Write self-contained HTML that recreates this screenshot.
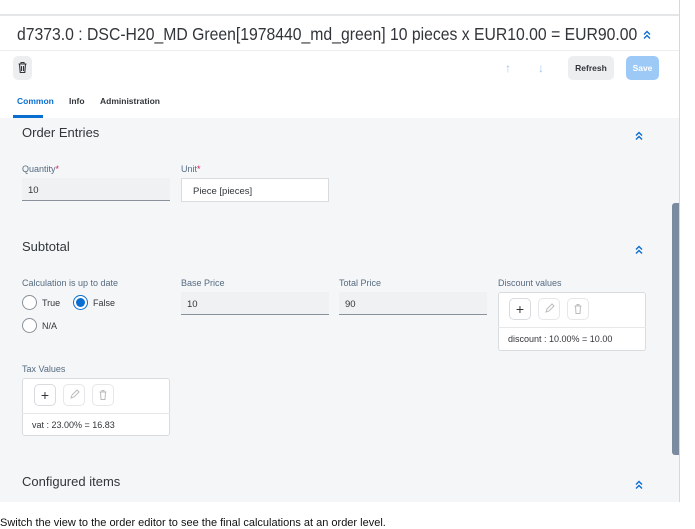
<!DOCTYPE html>
<html><head><style>
*{box-sizing:border-box;margin:0;padding:0}
body{width:695px;height:522px;overflow:hidden;background:#fff;font-family:"Liberation Sans",sans-serif;position:relative;color:#32363a}
.a{position:absolute}
.lbl{font-size:9px;color:#556b82}
.inp{position:absolute;height:23px;background:#eff1f2;border-bottom:1px solid #89919a;font-size:9.5px;padding:7px 6px;color:#32363a}
.chev{position:absolute}
.radio{position:absolute;width:15px;height:15px;border-radius:50%;border:1px solid #89919a;background:#fff}
.box{position:absolute;background:#fff;border:1px solid #d9dcdf;border-radius:3px}
.btn{position:absolute;width:22px;height:22px;border:1px solid #e5e7e9;border-radius:5px;background:#fff;text-align:center;font-size:14px;line-height:20px}
</style></head><body>
<div class="a" style="left:0;top:14px;width:679px;height:2px;background:#e4e6e8"></div>
<div class="a" style="left:679px;top:0;width:1px;height:502px;background:#d6d9dc"></div>
<div class="a" style="left:17px;top:24px;font-size:17.5px;color:#32363a;white-space:nowrap;transform:scaleX(0.9);transform-origin:0 0">d7373.0 : DSC-H20_MD Green[1978440_md_green] 10 pieces x EUR10.00 = EUR90.00</div>
<svg class="chev" style="left:643px;top:30px" width="8" height="10" viewBox="0 0 8 10"><path d="M1 4.5L4 1.5 7 4.5M1 8.5L4 5.5 7 8.5" fill="none" stroke="#0a6ed1" stroke-width="1.4"/></svg>
<div class="a" style="left:0;top:50px;width:679px;height:1px;background:#eceef0"></div>
<div class="a" style="left:13px;top:56px;width:19px;height:24px;background:#eceef0;border-radius:5px"></div>
<svg class="a" style="left:17px;top:61px" width="11" height="13" viewBox="0 0 11 13"><path d="M1.5 3h8M4 3V1.5h3V3M2.5 3l.7 8.5h4.6L8.5 3M4.5 5v5M6.5 5v5" fill="none" stroke="#32363a" stroke-width="1.1"/></svg>
<div class="a" style="left:505px;top:61px;color:#9cc6ef;font-size:12px">↑</div>
<div class="a" style="left:538px;top:61px;color:#9cc6ef;font-size:12px">↓</div>
<div class="a" style="left:568px;top:56px;width:46px;height:24px;background:#eceef0;border-radius:5px;font-size:8.5px;font-weight:bold;text-align:center;line-height:24px;color:#32363a">Refresh</div>
<div class="a" style="left:626px;top:56px;width:33px;height:24px;background:#9cc9f6;border-radius:5px;font-size:8.5px;font-weight:bold;text-align:center;line-height:24px;color:#fff">Save</div>
<div class="a" style="left:17px;top:96px;font-size:8.5px;font-weight:bold;color:#0a6ed1">Common</div>
<div class="a" style="left:69px;top:96px;font-size:8.5px;font-weight:bold">Info</div>
<div class="a" style="left:100px;top:96px;font-size:8.5px;font-weight:bold">Administration</div>
<div class="a" style="left:13px;top:115px;width:30px;height:3px;background:#0a6ed1"></div>
<div class="a" style="left:0;top:118px;width:679px;height:384px;background:#f5f6f7"></div>
<div class="a" style="left:672px;top:203px;width:7px;height:252px;background:#7a8ba0;border-radius:3px 0 0 3px"></div>
<div class="a" style="left:22px;top:125px;font-size:13px">Order Entries</div>
<svg class="chev" style="left:635px;top:131px" width="8" height="10" viewBox="0 0 8 10"><path d="M1 4.5L4 1.5 7 4.5M1 8.5L4 5.5 7 8.5" fill="none" stroke="#0a6ed1" stroke-width="1.4"/></svg>
<div class="a lbl" style="left:22px;top:164px">Quantity<span style="color:#d81b60">*</span></div>
<div class="inp" style="left:22px;top:178px;width:148px">10</div>
<div class="a lbl" style="left:181px;top:164px">Unit<span style="color:#d81b60">*</span></div>
<div class="a" style="left:181px;top:178px;width:148px;height:24px;background:#fff;border:1px solid #d9dcdf;font-size:9.5px;padding:7px 11px">Piece [pieces]</div>
<div class="a" style="left:22px;top:239px;font-size:13px">Subtotal</div>
<svg class="chev" style="left:635px;top:245px" width="8" height="10" viewBox="0 0 8 10"><path d="M1 4.5L4 1.5 7 4.5M1 8.5L4 5.5 7 8.5" fill="none" stroke="#0a6ed1" stroke-width="1.4"/></svg>
<div class="a lbl" style="left:22px;top:278px">Calculation is up to date</div>
<div class="radio" style="left:22px;top:295px"></div><div class="a" style="left:42px;top:298px;font-size:9px">True</div>
<div class="radio" style="left:73px;top:295px;border-color:#0a6ed1"><div style="width:9px;height:9px;border-radius:50%;background:#0a6ed1;margin:2px"></div></div><div class="a" style="left:93px;top:298px;font-size:9px">False</div>
<div class="radio" style="left:22px;top:318px"></div><div class="a" style="left:42px;top:321px;font-size:9px">N/A</div>
<div class="a lbl" style="left:181px;top:278px">Base Price</div>
<div class="inp" style="left:181px;top:292px;width:148px">10</div>
<div class="a lbl" style="left:339px;top:278px">Total Price</div>
<div class="inp" style="left:339px;top:292px;width:148px">90</div>
<div class="a lbl" style="left:498px;top:278px">Discount values</div>
<div class="box" style="left:498px;top:292px;width:148px;height:59px"></div>
<div class="a" style="left:498px;top:327px;width:148px;height:1px;background:#e5e7e9"></div>
<div class="btn" style="left:509px;top:298px;border-color:#d9dcdf">+</div>
<div class="btn" style="left:538px;top:298px"><svg width="20" height="20" viewBox="0 0 20 20"><path d="M7 13l1-3 5-5 2 2-5 5z" fill="none" stroke="#bbb" stroke-width="1"/></svg></div>
<div class="btn" style="left:567px;top:298px"><svg width="20" height="20" viewBox="0 0 20 20"><path d="M6.5 7h7M9 7V5.5h2V7M7.5 7l.5 7.5h4l.5-7.5" fill="none" stroke="#bbb" stroke-width="1"/></svg></div>
<div class="a" style="left:508px;top:334px;font-size:9px">discount : 10.00% = 10.00</div>
<div class="a lbl" style="left:22px;top:364px">Tax Values</div>
<div class="box" style="left:22px;top:378px;width:148px;height:58px"></div>
<div class="a" style="left:22px;top:413px;width:148px;height:1px;background:#e5e7e9"></div>
<div class="btn" style="left:34px;top:384px;border-color:#d9dcdf">+</div>
<div class="btn" style="left:63px;top:384px"><svg width="20" height="20" viewBox="0 0 20 20"><path d="M7 13l1-3 5-5 2 2-5 5z" fill="none" stroke="#bbb" stroke-width="1"/></svg></div>
<div class="btn" style="left:92px;top:384px"><svg width="20" height="20" viewBox="0 0 20 20"><path d="M6.5 7h7M9 7V5.5h2V7M7.5 7l.5 7.5h4l.5-7.5" fill="none" stroke="#bbb" stroke-width="1"/></svg></div>
<div class="a" style="left:32px;top:420px;font-size:9px">vat : 23.00% = 16.83</div>
<div class="a" style="left:22px;top:474px;font-size:13px">Configured items</div>
<svg class="chev" style="left:635px;top:480px" width="8" height="10" viewBox="0 0 8 10"><path d="M1 4.5L4 1.5 7 4.5M1 8.5L4 5.5 7 8.5" fill="none" stroke="#0a6ed1" stroke-width="1.4"/></svg>
<div class="a" style="left:0;top:517px;font-size:11px;color:#111;white-space:nowrap">Switch the view to the order editor to see the final calculations at an order level.</div>
</body></html>
